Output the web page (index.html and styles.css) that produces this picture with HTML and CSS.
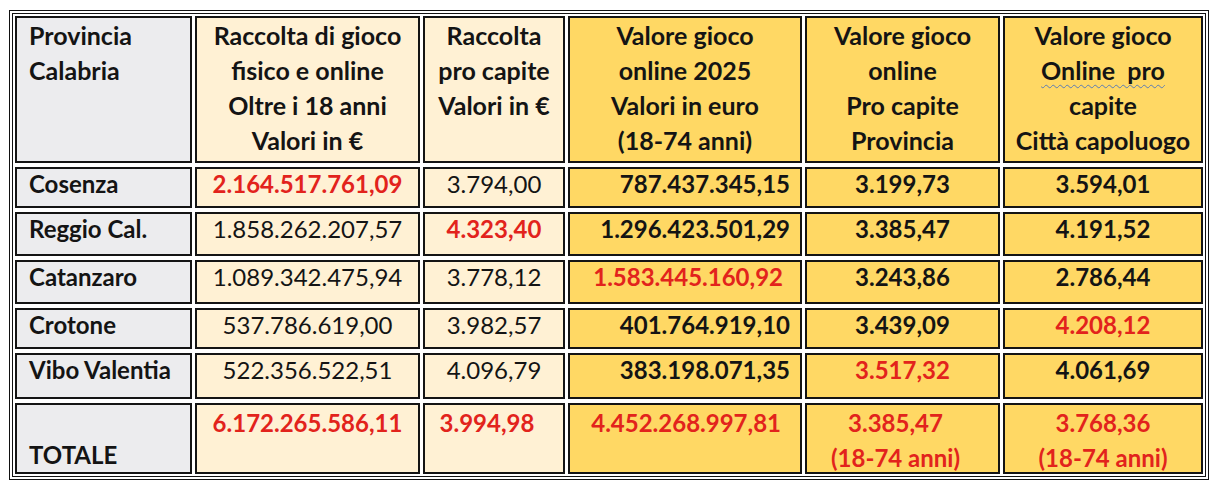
FILE: index.html
```html
<!DOCTYPE html>
<html lang="it">
<head>
<meta charset="utf-8">
<title>Gioco Calabria</title>
<link rel="stylesheet" href="styles.css">
</head>
<body>
<div class="sheet" role="table">
  <div class="cell grey head left" role="columnheader">Provincia<br>Calabria</div>
  <div class="cell cream head" role="columnheader">Raccolta di gioco<br>fisico e online<br>Oltre i 18 anni<br>Valori in €</div>
  <div class="cell cream head" role="columnheader">Raccolta<br>pro capite<br>Valori in €</div>
  <div class="cell gold head" role="columnheader">Valore gioco<br>online 2025<br>Valori in euro<br>(18-74 anni)</div>
  <div class="cell gold head" role="columnheader">Valore gioco<br>online<br>Pro capite<br>Provincia</div>
  <div class="cell gold head" role="columnheader">Valore gioco<br><span class="squiggle">Online&nbsp; pro</span><br>capite<br>Città capoluogo</div>

  <div class="cell grey row label">Cosenza</div>
  <div class="cell cream row mid red bold">2.164.517.761,09</div>
  <div class="cell cream row mid">3.794,00</div>
  <div class="cell gold row end bold">787.437.345,15</div>
  <div class="cell gold row mid bold">3.199,73</div>
  <div class="cell gold row mid bold">3.594,01</div>

  <div class="cell grey row label">Reggio Cal.</div>
  <div class="cell cream row mid">1.858.262.207,57</div>
  <div class="cell cream row mid red bold">4.323,40</div>
  <div class="cell gold row end bold">1.296.423.501,29</div>
  <div class="cell gold row mid bold">3.385,47</div>
  <div class="cell gold row mid bold">4.191,52</div>

  <div class="cell grey row label">Catanzaro</div>
  <div class="cell cream row mid">1.089.342.475,94</div>
  <div class="cell cream row mid">3.778,12</div>
  <div class="cell gold row end inset red">1.583.445.160,92</div>
  <div class="cell gold row mid bold">3.243,86</div>
  <div class="cell gold row mid bold">2.786,44</div>

  <div class="cell grey row label">Crotone</div>
  <div class="cell cream row mid">537.786.619,00</div>
  <div class="cell cream row mid">3.982,57</div>
  <div class="cell gold row end bold">401.764.919,10</div>
  <div class="cell gold row mid bold">3.439,09</div>
  <div class="cell gold row mid red">4.208,12</div>

  <div class="cell grey row label">Vibo Valentia</div>
  <div class="cell cream row mid">522.356.522,51</div>
  <div class="cell cream row mid">4.096,79</div>
  <div class="cell gold row end bold">383.198.071,35</div>
  <div class="cell gold row mid red">3.517,32</div>
  <div class="cell gold row mid bold">4.061,69</div>

  <div class="cell grey total label bottom">TOTALE</div>
  <div class="cell cream total mid red">6.172.265.586,11</div>
  <div class="cell cream total mid shift red">3.994,98</div>
  <div class="cell gold total end wide red">4.452.268.997,81</div>
  <div class="cell gold total mid shift red">3.385,47<br>(18-74 anni)</div>
  <div class="cell gold total mid red">3.768,36<br>(18-74 anni)</div>
</div>
</body>
</html>
```

FILE: styles.css
```css
html, body {
  margin: 0;
  padding: 0;
  background: #ffffff;
}

body {
  font-family: "Lato", "Noto Sans", sans-serif;
  color: #141414;
}

.sheet {
  display: grid;
  grid-template-columns: 177px 225px 142px 234px 195px 200px;
  grid-template-rows: 147px 41px 44px 44px 41px 46px 71px;
  column-gap: 3px;
  row-gap: 4px;
  width: max-content;
  margin: 10px 0 0 9px;
  padding: 2px;
  border: 4px double #111111;
}

.cell {
  border: 2px solid #141414;
  box-sizing: border-box;
  font-size: 24px;
  overflow: hidden;
  white-space: nowrap;
}

.grey { background: #ececee; }
.cream { background: #fff1d4; }
.gold { background: #ffd864; }

.head {
  font-size: 25px;
  font-weight: 700;
  line-height: 35px;
  text-align: center;
}

.head.left {
  text-align: left;
  padding-left: 12px;
}

.squiggle {
  text-decoration: underline wavy #5a7bb5;
  text-decoration-thickness: 1px;
  text-underline-offset: 4px;
}

.row {
  line-height: 30px;
}

.total {
  line-height: 35px;
}

.label {
  font-weight: 700;
  padding-left: 12px;
}

.bottom {
  display: flex;
  align-items: flex-end;
}

.mid { text-align: center; }

.end {
  text-align: right;
  padding-right: 10px;
}

.end.inset { padding-right: 17px; }
.end.wide { padding-right: 19px; }
.shift { padding-right: 14px; }

.bold { font-weight: 700; }

.red {
  color: #e2231c;
  font-weight: 700;
}
```
